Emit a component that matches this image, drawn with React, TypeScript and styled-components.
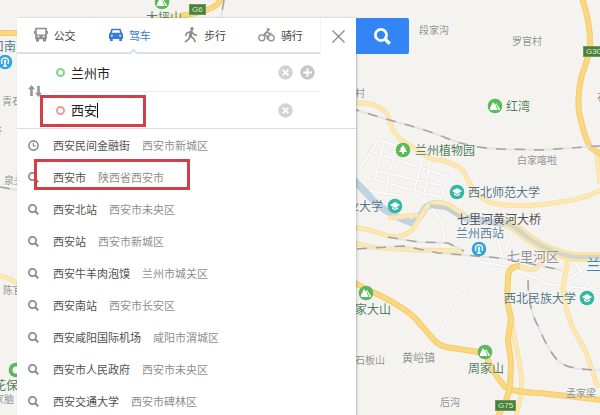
import React, { useState } from "react";
import styled, { createGlobalStyle } from "styled-components";

const GlobalStyle = createGlobalStyle`
  *, *::before, *::after { box-sizing: border-box; }
  body {
    margin: 0;
    background: #f5f3f0;
    font-family: "Noto Sans CJK SC", "Noto Sans", sans-serif;
  }
  button, input { font: inherit; color: inherit; border: 0; padding: 0; background: none; }
  button { cursor: pointer; }
`;

const Page = styled.main`
  position: relative;
  display: flex;
  align-items: flex-start;
  min-height: 100vh;
  padding: 18px 0 0 17px;
  overflow: hidden;
`;

/* ---------- map ---------- */

const MapLayer = styled.div`
  position: absolute;
  inset: 0;
  overflow: hidden;
`;

const MapCanvas = styled.svg`
  position: absolute;
  top: 0;
  left: 0;
  overflow: visible;
`;

const tones = {
  village: "#8f9290",
  park: "#50805a",
  school: "#527684",
  station: "#5a7ea2",
  bridge: "#505050",
  district: "#909296",
  city: "#2f86c4",
};

type Tone = keyof typeof tones;

const MapLabel = styled.span<{ $x: number; $y: number; $size: number; $tone: Tone }>`
  position: absolute;
  left: ${(p) => p.$x}px;
  top: ${(p) => p.$y}px;
  height: 14px;
  margin-top: -7px;
  font-size: ${(p) => p.$size}px;
  line-height: 14px;
  white-space: nowrap;
  color: ${(p) => tones[p.$tone]};
  text-shadow: 0 0 2px #fff;
`;

const RoadBadge = styled.span<{ $x: number; $y: number }>`
  position: absolute;
  left: ${(p) => p.$x}px;
  top: ${(p) => p.$y}px;
  padding: 0 2px;
  border: 1px solid #6f9a52;
  background: #47803f;
  color: #e6efcf;
  font-family: "Liberation Sans", sans-serif;
  font-size: 8px;
  line-height: 9px;
`;

const labels: [string, number, number, number, Tone][] = [
  ["大坪山", 146, 17, 12, "park"],
  ["段家沟", 419, 30, 10, "village"],
  ["罗官村", 512, 41, 10, "village"],
  ["村", 355, 93, 10, "village"],
  ["石", 597, 97, 10, "village"],
  ["红湾", 506, 106, 12, "park"],
  ["兰州植物园", 415, 150, 12, "park"],
  ["白家喀啦", 517, 160, 10, "village"],
  ["西北师范大学", 468, 192, 12, "school"],
  ["业大学", 347, 206, 12, "school"],
  ["七里河黄河大桥", 457, 219, 12, "bridge"],
  ["兰州西站", 456, 233, 12, "station"],
  ["七里河区", 507, 256, 13, "district"],
  ["兰州", 586, 264, 15, "city"],
  ["西北民族大学", 504, 298, 12, "school"],
  ["家大山", 355, 309, 12, "park"],
  ["黄峪镇", 402, 357, 11, "village"],
  ["石板山", 355, 360, 10, "village"],
  ["周家山", 468, 368, 12, "park"],
  ["孟家梁", 566, 393, 10, "village"],
  ["后沟", 440, 402, 10, "village"],
  ["口南", -8, 46, 12, "school"],
  ["青石", 2, 101, 10, "village"],
  ["谷", -8, 130, 10, "village"],
  ["泉头", 4, 180, 10, "village"],
  ["陈官", 3, 290, 10, "village"],
  ["花保", -6, 385, 12, "park"],
  ["家脑", -6, 399, 10, "village"],
];

const mountains = [[162, 2], [495, 106], [366, 293], [485, 352]];
const campuses = [[457, 192], [395, 206], [587, 298]];
const stations = [[479, 249], [5, 62]];

const minorRoads = [
  "M470 283 L437 336 Q430 352 408 366 Q392 378 386 388",
  "M362 163 L378 140 L452 162",
  "M370 151 L452 178",
  "M372 170 L448 187",
  "M368 178 L442 198",
  "M384 142 L374 182 M396 146 L386 190 M422 160 L414 193 M430 162 L424 196 M446 182 L440 202",
  "M358 172 L376 144 M362 190 L402 196",
  "M432 207 L443 226 L444 240",
  "M480 262 L510 267 L548 284 L600 290",
  "M498 240 L504 262 M512 235 L506 250 M575 262 L588 284 L600 294 M568 280 L584 268",
  "M357 203 V300",
];

const roads = [
  "M350 103 H362 Q382 104 388 116 Q392 132 400 139 Q418 151 432 159 Q460 163 465 174 Q474 196 492 203 Q520 209 560 202 Q588 198 600 190",
  "M350 227 Q372 229 387 236 Q404 238 412 230 Q421 217 426 208 Q434 199 448 205 L466 216",
  "M350 241 Q364 247 380 248 L417 250 L463 251",
  "M388 218 L418 215",
  "M520 266 Q530 272 537 268 L546 256",
  "M568 259 L563 288 Q565 310 573 328 L586 352 L598 388",
  "M512 320 Q514 340 520 365 Q525 390 516 415",
  "M597 154 L600 184",
  "M0 276 Q10 277 20 286",
  "M150 20 L190 14",
];

const riverside = "M504 221 L513 226 L530 239 Q548 252 574 257 H600";

const highways = [
  "M582 -2 Q591 24 590 48 Q588 58 582 75 Q577 95 579 112 Q584 136 590 147 L602 155",
  "M350 280 L366 289 Q400 304 415 318 L434 340 Q440 347 452 348 L485 353 Q492 372 505 387 Q512 392 540 393 L602 400",
  "M520 266 Q508 266 508 278 L507 300 L511 318 L508 340 L511 362 L510 386 Q508 400 498 416",
  "M180 16 Q208 12 218 4 L221 -2",
  "M0 33 H20",
];

const railways = [
  "M350 108 Q372 115 400 123 Q430 131 446 138 Q470 148 500 149 L540 150 L600 146",
  "M357 249 L404 246 L438 253 L500 258 L562 270",
  "M388 237 L418 242 L448 243 L464 251",
  "M528 280 Q528 308 538 326 Q548 350 558 361 Q568 370 600 370",
  "M224 0 L221 18",
  "M0 187 L18 190",
];

const river = "M350 176 L370 197 Q384 213 412 223 Q420 219 425 208 Q434 200 448 206 L466 218 L506 224";

function BaseMap() {
  return (
    <MapLayer>
      <MapCanvas width="600" height="415" viewBox="0 0 600 415" fill="none" aria-hidden="true">
        {minorRoads.map((d) => (
          <g key={d}>
            <path d={d} stroke="#e4e2e0" strokeWidth="3" />
            <path d={d} stroke="#fcfcfc" strokeWidth="2" />
          </g>
        ))}
        <path d={river} stroke="#bfd3e3" strokeWidth="7" strokeLinejoin="round" />
        {roads.map((d) => (
          <g key={d}>
            <path d={d} stroke="#f8e0a8" strokeWidth="5" strokeLinejoin="round" />
            <path d={d} stroke="#fde8b2" strokeWidth="3" strokeLinejoin="round" />
          </g>
        ))}
        <path d={riverside} stroke="#fbe3a6" strokeWidth="10" />
        <path d={riverside} stroke="#cfd5cf" strokeWidth="4" />
        <path d="M430 206 L446 208 L462 218" stroke="#c6cfd0" strokeWidth="4" />
        {highways.map((d) => (
          <g key={d}>
            <path d={d} stroke="#f5cb72" strokeWidth="6" strokeLinejoin="round" />
            <path d={d} stroke="#fbd77e" strokeWidth="4" strokeLinejoin="round" />
          </g>
        ))}
        {railways.map((d) => (
          <g key={d}>
            <path d={d} stroke="#e6e4e2" strokeWidth="2" />
            <path d={d} stroke="#a3a3a3" strokeWidth="1.5" strokeDasharray="10 9" />
          </g>
        ))}
        {mountains.map(([x, y]) => (
          <g key={`${x}-${y}`} transform={`translate(${x} ${y})`}>
            <circle r="7.3" fill="#5cb85a" />
            <path d="M-5 4 V2 L-2 -4 L0 -1 L1 -3 L5 3 V4 Z" fill="#fff" />
            <path d="M1 -1 L3 4" stroke="#5cb85a" />
          </g>
        ))}
        <g transform="translate(403 150)">
          <circle r="7.3" fill="#5cb85a" />
          <path d="M0 -5 L3 -1 H2 L4 2 H1 V4 H-1 V2 H-4 L-2 -1 H-3 Z" fill="#fff" />
        </g>
        <g transform="translate(16 370)">
          <circle r="7.3" fill="#5cb85a" />
          <circle r="3.5" fill="#fff" />
        </g>
        {campuses.map(([x, y]) => (
          <g key={`${x}-${y}`} transform={`translate(${x} ${y})`}>
            <circle r="7.3" fill="#35b7a5" />
            <path d="M-5 -1 L0 -4 L5 -1 L0 2 Z M-3 1 L0 3 L3 1 V3 L0 4 L-3 3 Z" fill="#fff" />
          </g>
        ))}
        {stations.map(([x, y]) => (
          <g key={`${x}-${y}`} transform={`translate(${x} ${y})`}>
            <circle r="7.3" fill="#2fa4df" />
            <path d="M-3 2 Q-5 -4 0 -4 Q5 -4 3 2 M0 -1 V4 M-2 4 H2" stroke="#fff" strokeWidth="1.5" />
            <circle cy="-1" r="1.3" fill="#fff" />
          </g>
        ))}
      </MapCanvas>
      {labels.map(([text, x, y, size, tone]) => (
        <MapLabel key={`${text}-${x}`} $x={x} $y={y} $size={size} $tone={tone}>
          {text}
        </MapLabel>
      ))}
      <RoadBadge $x={189} $y={4}>G6</RoadBadge>
      <RoadBadge $x={583} $y={46}>G30</RoadBadge>
      <RoadBadge $x={495} $y={400}>G75</RoadBadge>
    </MapLayer>
  );
}

/* ---------- route panel ---------- */

const Panel = styled.section`
  position: relative;
  flex: 0 1 339px;
  min-height: calc(100vh - 18px);
  background: #fff;
  box-shadow: 1px 0 2px rgba(0, 0, 0, 0.25);
`;

const RouteForm = styled.form`
  display: grid;
  grid-template-columns: 1fr 36px;
  border-bottom: 1px solid #dcdcdc;
`;

const Tabs = styled.div`
  display: grid;
  grid-template-columns: repeat(4, 1fr);
  height: 36px;
  padding-right: 2px;
  border-bottom: 2px solid #d3e2ec;
`;

const Tab = styled.button<{ $active: boolean }>`
  position: relative;
  display: flex;
  align-items: center;
  justify-content: center;
  gap: 6px;
  white-space: nowrap;
  font-size: 11px;
  line-height: 16px;
  color: ${(p) => (p.$active ? "#3a7cd6" : "#444")};

  svg { color: ${(p) => (p.$active ? "#3a7cd6" : "#8d8d8d")}; }
`;

const TabNotch = styled.span`
  position: absolute;
  left: 50%;
  bottom: -5px;
  width: 7px;
  height: 7px;
  border: solid #d3e2ec;
  border-width: 2px 0 0 2px;
  background: #fff;
  transform: rotate(45deg);
`;

const CloseButton = styled.button`
  display: flex;
  align-items: center;
  justify-content: center;
  height: 36px;
  border-left: 1px solid #f3f3f3;
  color: #8a8a8a;
`;

const Stops = styled.div`
  display: grid;
  grid-template-columns: 36px 1fr;
`;

const SwapButton = styled.button`
  display: flex;
  align-items: center;
  justify-content: center;
  color: #949494;
`;

const StopRow = styled.div`
  display: flex;
  align-items: center;
  height: 37px;
  padding-right: 5px;

  & + & { border-top: 1px solid #eee; }
`;

const StopDot = styled.span<{ $color: string }>`
  width: 9px;
  height: 9px;
  margin: 0 6px 0 3px;
  border: 2px solid ${(p) => p.$color};
  border-radius: 50%;
`;

const StopInput = styled.input`
  field-sizing: content;
  min-width: 13px;
  outline: none;
  color: #222;
  font-size: 13px;
  line-height: 20px;
`;

const Caret = styled.span`
  width: 1px;
  height: 15px;
  background: #111;
`;

const StopActions = styled.div`
  display: grid;
  grid-template-columns: 15px 15px;
  gap: 7px;
  margin-left: auto;
`;

const RoundButton = styled.button`
  display: flex;
  width: 15px;
  height: 15px;
`;

const Suggestions = styled.ul`
  margin: 0;
  padding: 0;
  list-style: none;
`;

const Suggestion = styled.button`
  display: flex;
  align-items: center;
  width: 100%;
  height: 32px;
  padding-left: 11px;
  font-size: 11px;
  line-height: 16px;
  white-space: nowrap;
  text-align: left;

  svg { flex: none; margin-right: 14px; color: #8c8c8c; }
`;

const PlaceName = styled.span`
  margin-right: 12px;
  color: #505050;
`;

const PlaceArea = styled.span`
  color: #8e8e8e;
`;

const SearchButton = styled.button`
  position: relative;
  display: flex;
  align-items: center;
  justify-content: center;
  width: 53px;
  height: 36px;
  border-radius: 0 2px 2px 0;
  background: #3385f6;
  color: #fff;
`;

const Highlight = styled.div<{ $x: number; $y: number; $w: number; $h: number }>`
  position: absolute;
  left: ${(p) => p.$x}px;
  top: ${(p) => p.$y}px;
  width: ${(p) => p.$w}px;
  height: ${(p) => p.$h}px;
  border: 3px solid #d04049;
  pointer-events: none;
`;

const BusIcon = () => (
  <svg width="14" height="16" viewBox="0 0 14 16" fill="none" aria-hidden="true">
    <path d="M2 1.5 H12 V11.5 H2 Z" stroke="currentColor" strokeWidth="1.6" />
    <path d="M2 7.5 H12 V12 H2 Z M2 12 H5 V14.5 H2 Z M9 12 H12 V14.5 H9 Z M0 4 H1.5 V7 H0 Z M12.5 4 H14 V7 H12.5 Z" fill="currentColor" />
    <path d="M3.5 9.5 H5.5 M8.5 9.5 H10.5" stroke="#fff" strokeWidth="1.3" />
  </svg>
);

const CarIcon = () => (
  <svg width="14" height="14" viewBox="0 0 14 14" aria-hidden="true">
    <path
      fill="currentColor"
      fillRule="evenodd"
      d="M3 .8 H11 Q11.8 .8 12 1.6 L12.8 4.8 Q14 5.2 14 6.4 V11 H13 V13 H10.3 V11 H3.7 V13 H1 V11 H0 V6.4 Q0 5.2 1.2 4.8 L2 1.6 Q2.2 .8 3 .8 Z M3.6 2.3 L2.9 4.8 H11.1 L10.4 2.3 Z M2.9 6.8 A.9 .9 0 1 0 2.9 8.6 A.9 .9 0 1 0 2.9 6.8 Z M11.1 6.8 A.9 .9 0 1 0 11.1 8.6 A.9 .9 0 1 0 11.1 6.8 Z"
    />
  </svg>
);

const WalkIcon = () => (
  <svg width="14" height="16" viewBox="0 0 14 16" fill="none" stroke="currentColor" aria-hidden="true">
    <circle cx="8" cy="1.9" r="1.8" fill="currentColor" stroke="none" />
    <path d="M7.2 5 L6.2 9.3" strokeWidth="3" strokeLinecap="round" />
    <path d="M6 4.8 L2.6 6.3 L1.6 9 M8 5 L10 7.5 L12.8 8.4 M6 9.5 L4.6 12.3 L1 15 M7 9.5 L9.6 11.6 L11.4 15.2" strokeWidth="1.7" />
  </svg>
);

const BikeIcon = () => (
  <svg width="17" height="14" viewBox="0 0 17 14" fill="none" stroke="currentColor" aria-hidden="true">
    <circle cx="3.8" cy="9.8" r="3" strokeWidth="1.3" />
    <circle cx="13.2" cy="9.8" r="3" strokeWidth="1.3" />
    <circle cx="10.2" cy="1.6" r="1.5" fill="currentColor" stroke="none" />
    <path d="M9.4 11.5 V8.3 L6.3 6.2 L9.2 3.6 L10.8 5.6 H13.6" strokeWidth="1.6" strokeLinejoin="round" />
  </svg>
);

const Magnifier = ({ size = 11 }: { size?: number }) => (
  <svg width={size} height={size} viewBox="0 0 11 11" fill="none" stroke="currentColor" aria-hidden="true">
    <circle cx="4.5" cy="4.5" r="3.6" strokeWidth="1.8" />
    <path d="M7 7 L10.2 10.2" strokeWidth="2.2" />
  </svg>
);

const ClockIcon = () => (
  <svg width="11" height="11" viewBox="0 0 11 11" fill="none" stroke="currentColor" aria-hidden="true">
    <circle cx="5.5" cy="5.5" r="4.6" strokeWidth="1.6" />
    <path d="M5.3 2.8 V6 H8" strokeWidth="1.2" />
  </svg>
);

const SwapIcon = () => (
  <svg width="14" height="13" viewBox="0 0 14 13" fill="currentColor" aria-hidden="true">
    <path d="M3.5 0 L7 4.2 H4.8 V11 H2.2 V4.2 H0 Z M10.5 12 L14 7.8 H11.8 V1 H9.2 V7.8 H7 Z" />
  </svg>
);

const RoundIcon = ({ plus = false }: { plus?: boolean }) => (
  <svg width="15" height="15" viewBox="0 0 15 15" aria-hidden="true">
    <circle cx="7.5" cy="7.5" r="7.2" fill={plus ? "#c6c6c6" : "#d2d2d2"} />
    <path
      d={plus ? "M7.5 3.2 V11.8 M3.2 7.5 H11.8" : "M4.7 4.7 L10.3 10.3 M10.3 4.7 L4.7 10.3"}
      stroke="#fff"
      strokeWidth="1.8"
    />
  </svg>
);

const modes = [
  { name: "公交", Icon: BusIcon },
  { name: "驾车", Icon: CarIcon },
  { name: "步行", Icon: WalkIcon },
  { name: "骑行", Icon: BikeIcon },
];

const places = [
  ["西安民间金融街", "西安市新城区"],
  ["西安市", "陕西省西安市"],
  ["西安北站", "西安市未央区"],
  ["西安站", "西安市新城区"],
  ["西安牛羊肉泡馍", "兰州市城关区"],
  ["西安南站", "西安市长安区"],
  ["西安咸阳国际机场", "咸阳市渭城区"],
  ["西安市人民政府", "西安市未央区"],
  ["西安交通大学", "西安市碑林区"],
];

export default function App() {
  const [mode, setMode] = useState("驾车");
  const [start, setStart] = useState("兰州市");
  const [end, setEnd] = useState("西安");

  return (
    <>
      <GlobalStyle />
      <Page>
        <BaseMap />
        <Panel>
          <RouteForm onSubmit={(e) => e.preventDefault()}>
            <Tabs role="tablist">
              {modes.map(({ name, Icon }) => (
                <Tab
                  key={name}
                  type="button"
                  role="tab"
                  aria-selected={mode === name}
                  $active={mode === name}
                  onClick={() => setMode(name)}
                >
                  <Icon />
                  {name}
                  {mode === name && <TabNotch />}
                </Tab>
              ))}
            </Tabs>
            <CloseButton type="button" aria-label="关闭">
              <svg width="13" height="13" viewBox="0 0 13 13" stroke="currentColor" strokeWidth="1.3" aria-hidden="true">
                <path d="M.5 .5 L12.5 12.5 M12.5 .5 L.5 12.5" />
              </svg>
            </CloseButton>
            <Stops>
              <SwapButton type="button" aria-label="交换起点和终点">
                <SwapIcon />
              </SwapButton>
              <div>
                <StopRow>
                  <StopDot $color="#7fd48b" />
                  <StopInput aria-label="起点" value={start} onChange={(e) => setStart(e.target.value)} />
                  <StopActions>
                    <RoundButton type="button" aria-label="清空起点" onClick={() => setStart("")}>
                      <RoundIcon />
                    </RoundButton>
                    <RoundButton type="button" aria-label="添加途经点">
                      <RoundIcon plus />
                    </RoundButton>
                  </StopActions>
                </StopRow>
                <StopRow>
                  <StopDot $color="#f09a98" />
                  <StopInput aria-label="终点" value={end} onChange={(e) => setEnd(e.target.value)} />
                  <Caret />
                  <StopActions>
                    <RoundButton type="button" aria-label="清空终点" onClick={() => setEnd("")}>
                      <RoundIcon />
                    </RoundButton>
                  </StopActions>
                </StopRow>
              </div>
            </Stops>
          </RouteForm>
          <Suggestions>
            {places.map(([name, area], i) => (
              <li key={name}>
                <Suggestion type="button" onClick={() => setEnd(name)}>
                  {i === 0 ? <ClockIcon /> : <Magnifier />}
                  <PlaceName>{name}</PlaceName>
                  <PlaceArea>{area}</PlaceArea>
                </Suggestion>
              </li>
            ))}
          </Suggestions>
          <Highlight $x={23} $y={77} $w={106} $h={32} />
          <Highlight $x={17} $y={141} $w={156} $h={31} />
        </Panel>
        <SearchButton type="button" aria-label="搜索">
          <Magnifier size={17} />
        </SearchButton>
      </Page>
    </>
  );
}
